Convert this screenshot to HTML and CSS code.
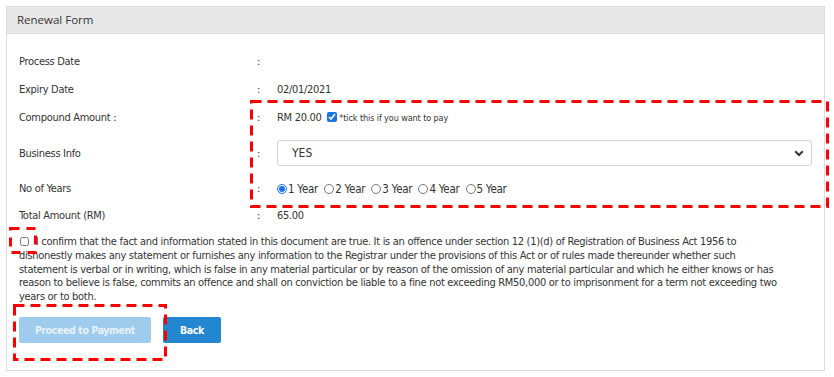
FILE: index.html
```html
<!DOCTYPE html>
<html>
<head>
<meta charset="utf-8">
<link rel="stylesheet" href="styles.css">
</head>
<body>
<div class="card">
  <div class="card-header">Renewal Form</div>
  <div class="card-body">
    <div class="form-grid">
      <div class="label row-t">Process Date</div><div class="colon row-t">:</div><div class="value row-t"></div>
      <div class="label row-t">Expiry Date</div><div class="colon row-t">:</div><div class="value row-t">02/01/2021</div>
      <div class="label row-t">Compound Amount :</div><div class="colon row-t">:</div>
      <div class="value row-t">RM 20.00 <input type="checkbox" class="tick" checked><span class="hint">*tick this if you want to pay</span></div>
      <div class="label row-s">Business Info</div><div class="colon row-s">:</div>
      <div class="value row-s"><div class="select"><span>YES</span>
        <svg class="chev" width="10" height="7" viewBox="0 0 10 7"><path d="M1.2 1.3 L5 5 L8.8 1.3" fill="none" stroke="#333" stroke-width="2"/></svg></div></div>
      <div class="label row-r">No of Years</div><div class="colon row-r">:</div>
      <div class="value row-r radios">
        <label class="opt"><input type="radio" name="y" checked>1 Year</label>
        <label class="opt"><input type="radio" name="y">2 Year</label>
        <label class="opt"><input type="radio" name="y">3 Year</label>
        <label class="opt"><input type="radio" name="y">4 Year</label>
        <label class="opt"><input type="radio" name="y">5 Year</label>
      </div>
      <div class="label row-l">Total Amount (RM)</div><div class="colon row-l">:</div><div class="value row-l">65.00</div>
    </div>
    <p class="confirm"><input type="checkbox" class="agree"> I confirm that the fact and information stated in this document are true. It is an offence under section 12 (1)(d) of Registration of Business Act 1956 to<br>dishonestly makes any statement or furnishes any information to the Registrar under the provisions of this Act or of rules made thereunder whether such<br>statement is verbal or in writing, which is false in any material particular or by reason of the omission of any material particular and which he either knows or has<br>reason to believe is false, commits an offence and shall on conviction be liable to a fine not exceeding RM50,000 or to imprisonment for a term not exceeding two<br>years or to both.</p>
    <div class="actions">
      <button class="btn btn-disabled">Proceed to Payment</button>
      <button class="btn btn-primary">Back</button>
    </div>
  </div>
</div>
<svg class="mark mark-main" width="579" height="108"><rect x="1.5" y="1.5" width="576" height="105" fill="none" stroke="#f00" stroke-width="3" stroke-dasharray="10 6"/></svg>
<svg class="mark mark-check" width="28" height="27"><rect x="1.5" y="1.5" width="25" height="24" fill="none" stroke="#f00" stroke-width="3" stroke-dasharray="9 7"/></svg>
<svg class="mark mark-btn" width="154" height="57"><rect x="1.5" y="1.5" width="151" height="54" fill="none" stroke="#f00" stroke-width="3" stroke-dasharray="10 6"/></svg>
</body>
</html>
```
FILE: styles.css
```css
html, body { margin: 0; padding: 0; background: #fff; }
body {
  padding: 6px 10px 0 6px;
  font-family: "DejaVu Sans", "Liberation Sans", sans-serif;
  font-stretch: condensed;
  font-size: 11px;
  letter-spacing: -0.3px;
  color: #333;
  position: relative;
}
.card {
  width: 817px;
  border: 1px solid #dcdcdc;
  background: #fff;
}
.card-header {
  height: 26px;
  background: #e8e8e8;
  border-bottom: 1px solid #e0e0e0;
  font-family: "Open Sans", sans-serif;
  font-stretch: normal;
  letter-spacing: 0;
  font-size: 11.5px;
  line-height: 25px;
  padding-left: 10px;
  color: #333;
}
.card-body { padding: 14px 12px 27px 12px; }
.form-grid {
  display: grid;
  grid-template-columns: 238px 20px 1fr;
}
.row-t { height: 28px; line-height: 28px; }
.row-s { height: 42px; display: flex; align-items: center; }
.row-r { height: 29px; display: flex; align-items: center; }
.row-l { height: 26px; line-height: 26px; }
.label, .colon, .value { white-space: nowrap; }
.tick { width: 10px; height: 10px; margin: 0 2px 0 3px; vertical-align: -1px; accent-color: #1a73e8; }
.hint { font-size: 9px; letter-spacing: -0.1px; }
.select {
  width: 512px;
  height: 24px;
  border: 1px solid #d4d4d4;
  border-radius: 3px;
  display: flex;
  align-items: center;
  justify-content: space-between;
  padding: 0 7px 0 14px;
  box-sizing: content-box;
  font-size: 12px;
  letter-spacing: 0;
}
.chev { display: block; }
.opt { display: inline-flex; align-items: center; margin-right: 6px; font-size: 11.5px; letter-spacing: -0.25px; }
.opt input { width: 10px; height: 10px; margin: 0 1px 0 0; accent-color: #1a73e8; }
.confirm {
  margin: 6px 0 0 0;
  line-height: 13.8px;
  white-space: nowrap;
}
.agree { width: 9px; height: 9px; margin: 0 4px 0 1px; vertical-align: -1px; }
.actions { display: flex; gap: 12px; margin-top: 13px; }
.btn {
  height: 26px;
  border: none;
  border-radius: 2px;
  color: #fff;
  font-family: "DejaVu Sans", sans-serif;
  font-stretch: condensed;
  font-weight: bold;
  font-size: 10.5px;
  letter-spacing: -0.4px;
  white-space: nowrap;
  padding: 0;
}
.btn-disabled { background: #9fcbec; color: #e6f1fa; width: 132px; }
.btn-primary { background: #2386d1; width: 58px; }
.mark { position: absolute; display: block; }
.mark-main { left: 250px; top: 100px; }
.mark-check { left: 9px; top: 227px; }
.mark-btn { left: 13px; top: 304px; }
```
